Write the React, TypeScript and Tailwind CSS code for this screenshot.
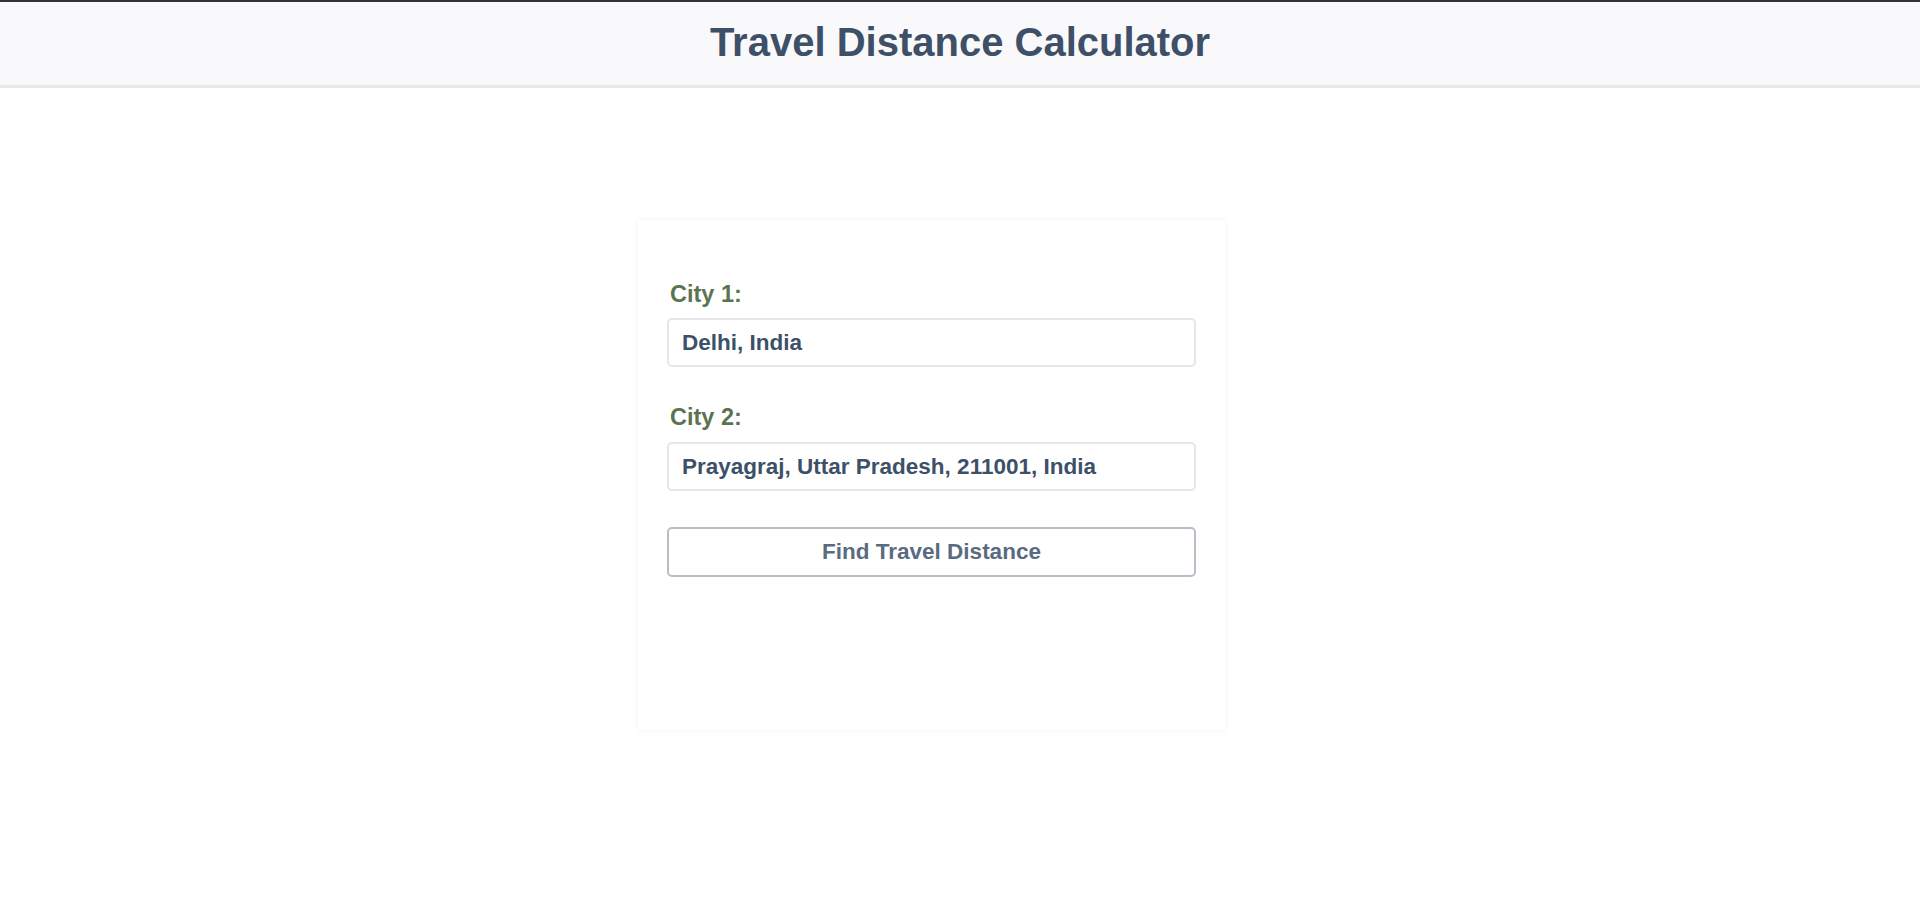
import React, { useState } from 'react'

export default function App() {
  const [city1, setCity1] = useState('Delhi, India')
  const [city2, setCity2] = useState('Prayagraj, Uttar Pradesh, 211001, India')

  return (
    <div className="min-h-screen bg-white" style={{ fontFamily: '"Liberation Sans", Arial, sans-serif' }}>
      <header className="h-[88px] border-t-2 border-b-[3px] border-t-[#32323a] border-b-[#e8e8ec] bg-[#f9f9fb] flex items-center justify-center pb-[3px]">
        <h1 className="text-[40px] font-bold text-[#3d5068] leading-none">Travel Distance Calculator</h1>
      </header>

      <main className="flex justify-center pr-[57px] pt-[132px]">
        <div className="w-[587px] h-[510px] bg-white shadow-[0_0_6px_rgba(0,0,0,0.06)] px-[29px] pt-[59px]">
          <div className="mb-[34px]">
            <label className="block text-[23.5px] font-bold text-[#5a7452] leading-[26px] pt-[2px] mb-[11px] pl-[3px]">City 1:</label>
            <input
              value={city1}
              onChange={(e) => setCity1(e.target.value)}
              className="w-full h-[49px] border-2 border-[#e6e6e6] rounded-[5px] px-[13px] text-[22.5px] font-bold text-[#3d5068] outline-none"
            />
          </div>
          <div className="mb-[36px]">
            <label className="block text-[23.5px] font-bold text-[#5a7452] leading-[26px] pt-[3px] mb-[12px] pl-[3px]">City 2:</label>
            <input
              value={city2}
              onChange={(e) => setCity2(e.target.value)}
              className="w-full h-[49px] border-2 border-[#e6e6e6] rounded-[5px] px-[13px] text-[22.5px] font-bold text-[#3d5068] outline-none"
            />
          </div>
          <button className="w-full h-[50px] border-2 border-[#b8bdc6] rounded-[5px] bg-white text-[22.5px] font-bold text-[#5a6b80]">
            Find Travel Distance
          </button>
        </div>
      </main>
    </div>
  )
}
